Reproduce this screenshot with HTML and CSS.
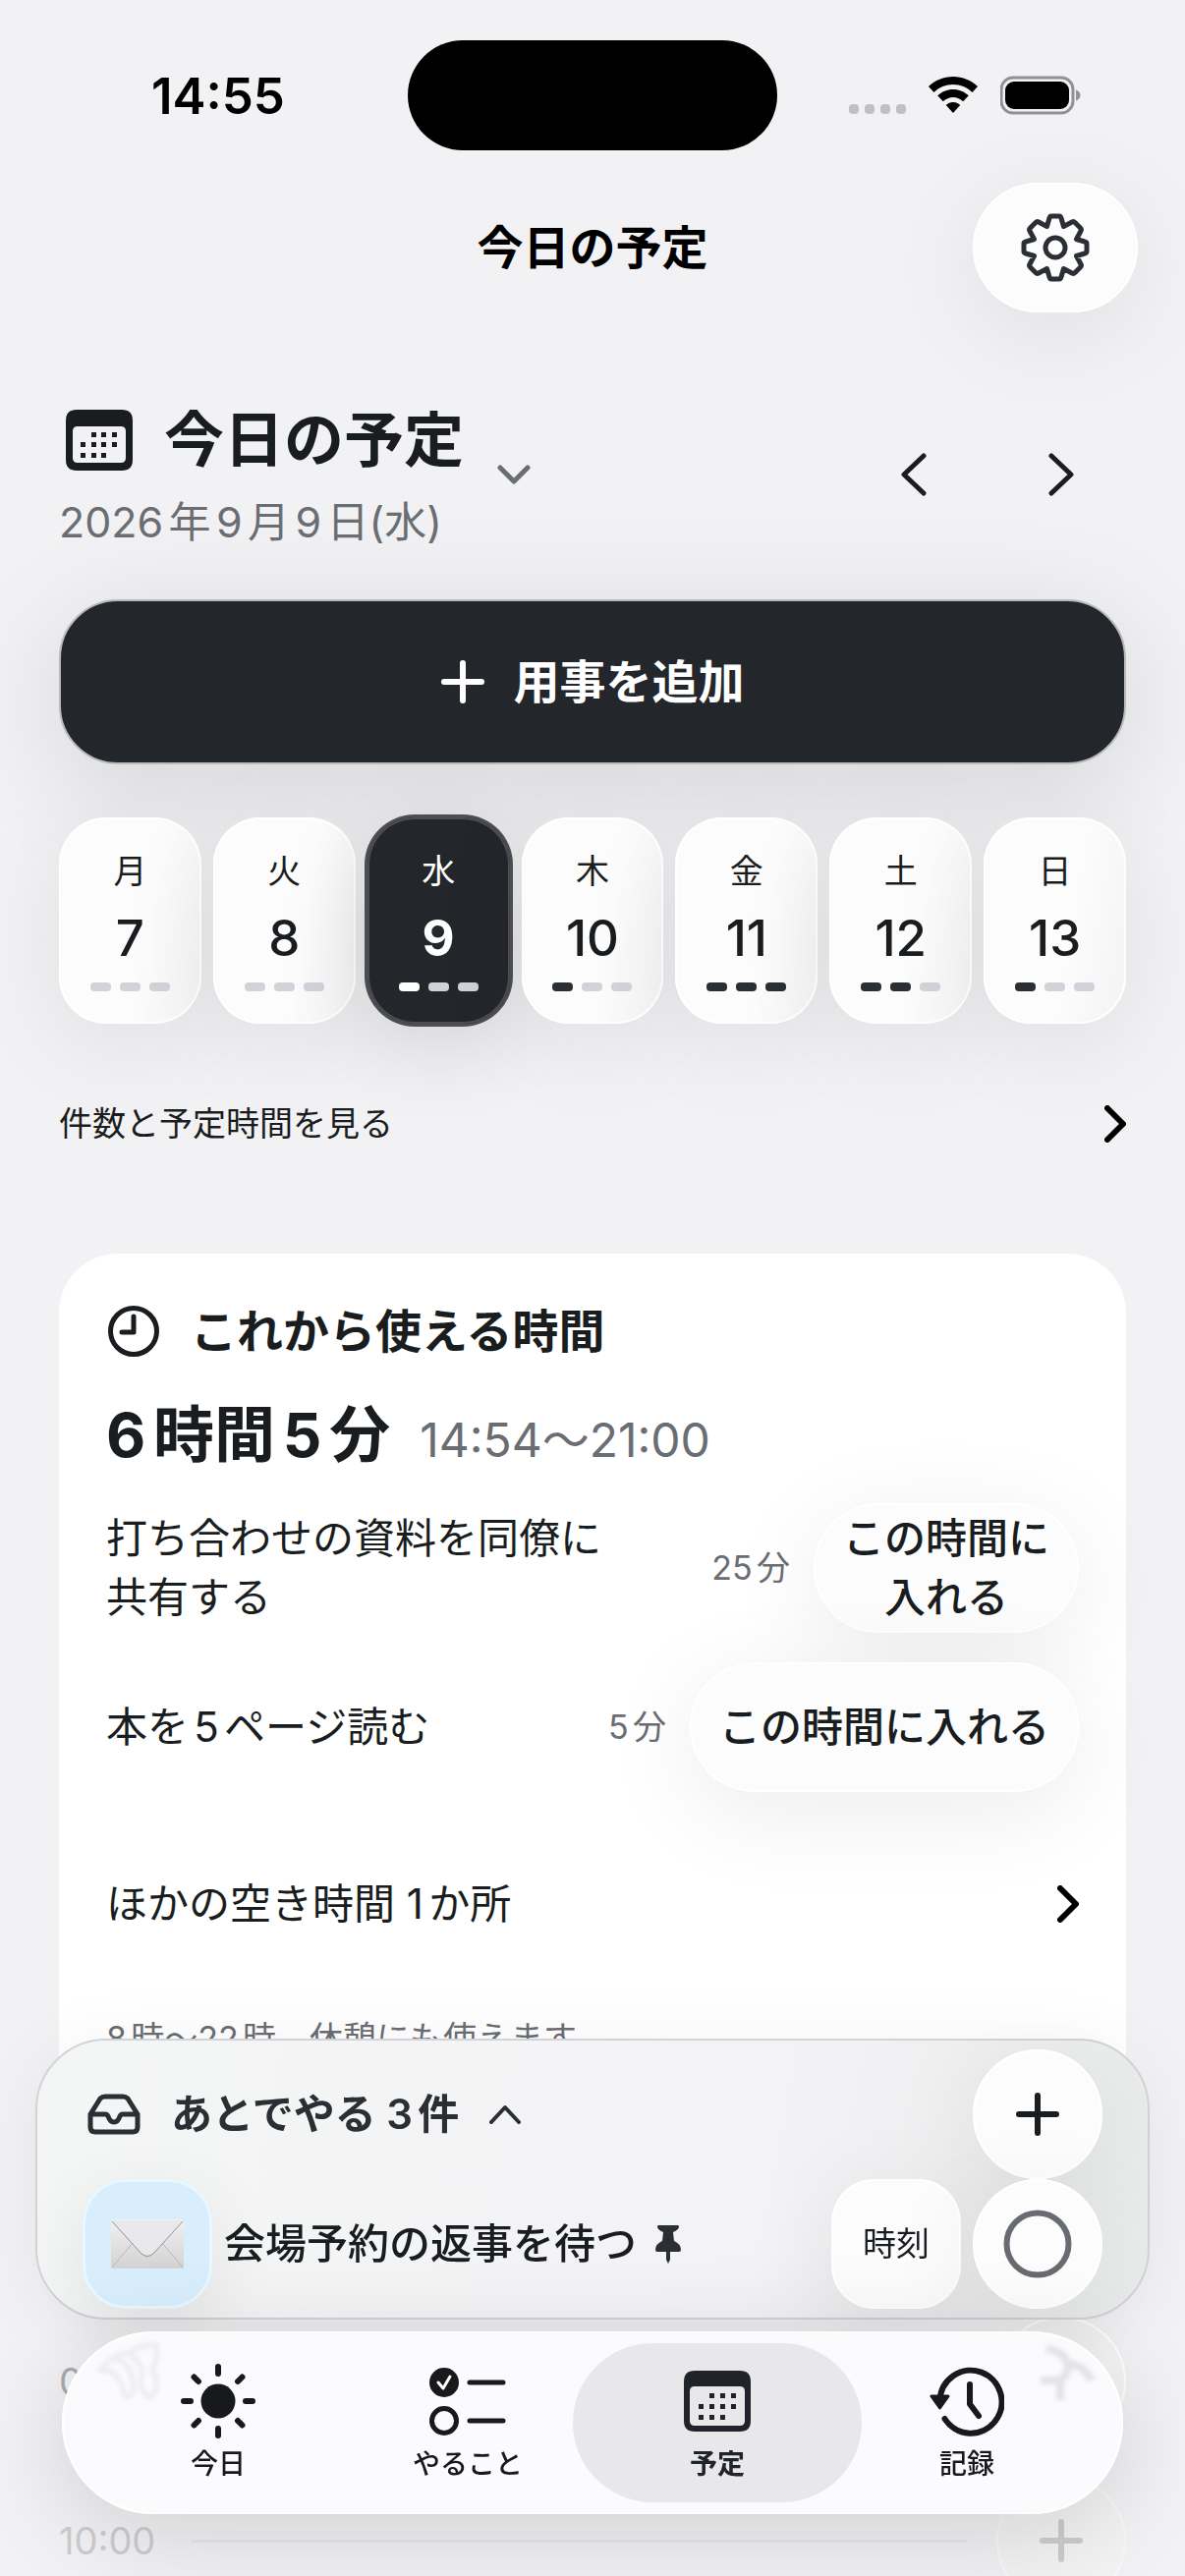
FILE: index.html
```html
<!DOCTYPE html>
<html lang="ja">
<head>
    <meta charset="UTF-8">
    <meta name="viewport" content="width=device-width, initial-scale=1.0">
    <title>今日の予定</title>
    <link rel="stylesheet" href="styles.css">
</head>
<body>
    <div class="app">
        <!-- ステータスバー -->
        <div class="status-bar">
            <div class="status-time">14:55</div>
            <div class="island"></div>
            <div class="status-icons">
                <svg width="58" height="40" viewBox="0 0 58 40" fill="#c0c0c3">
                    <rect x="0" y="29" width="10" height="10" rx="4"/>
                    <rect x="16" y="29" width="10" height="10" rx="4"/>
                    <rect x="32" y="29" width="10" height="10" rx="4"/>
                    <rect x="48" y="29" width="10" height="10" rx="4"/>
                </svg>
                <svg width="52" height="40" viewBox="0 0 52 40">
                    <path d="M26 1C16.500 1 7.500 4.700 1 11l5.500 6C11.700 11.900 18.600 9 26 9s14.300 2.900 19.500 8l5.500-6C44.500 4.700 35.500 1 26 1z"/>
                    <path d="M26 14c-6 0-11.600 2.300-15.800 6.300l5.600 6C18.600 23.600 22.200 22 26 22s7.400 1.600 10.200 4.300l5.600-6C37.600 16.300 32 14 26 14z"/>
                    <path d="M26 27c-2.800 0-5.300 1.100-7.200 2.900L26 38l7.200-8.100C31.300 28.100 28.800 27 26 27z"/>
                </svg>
                <svg width="82" height="40" viewBox="0 0 82 40">
                    <rect x="1" y="2" width="73" height="36" rx="12" fill="none" stroke="#929295" stroke-width="3"/>
                    <rect x="5" y="6" width="65" height="28" rx="9"/>
                    <path d="M77 14.500c3 1 4.500 3 4.500 5.500s-1.500 4.500-4.500 5.500z" fill="#929295"/>
                </svg>
            </div>
        </div>

        <!-- ナビゲーション -->
        <header class="nav-bar">
            <h1 class="nav-title">今日の予定</h1>
            <button class="settings-button glass" aria-label="設定">
                <svg width="72" height="72" viewBox="-36 -36 72 72" fill="none" stroke="#2b2e34" stroke-width="5" stroke-linejoin="round">
                    <path d="M-6-30Q-5.500-32-4-32H4Q5.500-32 6-30L8.500-21.500 17-26Q18.500-27 20-25.500L25.500-20Q27-18.500 26-17L21.500-8.500 30-6Q32-5.500 32-4V4Q32 5.500 30 6L21.500 8.500 26 17Q27 18.500 25.500 20L20 25.500Q18.500 27 17 26L8.500 21.500 6 30Q5.500 32 4 32H-4Q-5.500 32-6 30L-8.500 21.500-17 26Q-18.500 27-20 25.500L-25.500 20Q-27 18.500-26 17L-21.500 8.500-30 6Q-32 5.500-32 4V-4Q-32-5.500-30-6L-21.500-8.500-26-17Q-27-18.500-25.500-20L-20-25.500Q-18.500-27-17-26L-8.500-21.500Z"/>
                    <circle r="10"/>
                </svg>
            </button>
        </header>

        <main class="content">
            <div class="day-header">
                <button class="day-title">
                    <span class="day-text">
                        <span class="day-name">
                            <svg class="icon-calendar" width="68" height="62" viewBox="0 0 68 62">
                                <path fill-rule="evenodd" d="M11 0h46q11 0 11 11v40q0 11-11 11H11Q0 62 0 51V11Q0 0 11 0zM12 17q-5 0-5 5v27q0 5 5 5h44q5 0 5-5V22q0-5-5-5z"/>
                                <path d="M26 23h5v5h-5zM36 23h5v5h-5zM47 23h5v5h-5zM15 33h5v5h-5zM26 33h5v5h-5zM36 33h5v5h-5zM47 33h5v5h-5zM15 44h5v5h-5zM26 44h5v5h-5zM36 44h5v5h-5z"/>
                            </svg>
                            今日の予定
                        </span>
                        <span class="day-date">2026年9月9日(水)</span>
                    </span>
                    <svg class="line-icon muted" width="34" height="20" viewBox="0 0 34 20" stroke-width="5"><path d="M3 3l14 14L31 3"/></svg>
                </button>
                <div class="day-arrows">
                    <button aria-label="前の日"><svg class="line-icon" width="26" height="44" viewBox="0 0 26 44" stroke-width="5"><path d="M23 3L3 22l20 19"/></svg></button>
                    <button aria-label="次の日"><svg class="line-icon" width="26" height="44" viewBox="0 0 26 44" stroke-width="5"><path d="M3 3l20 19L3 41"/></svg></button>
                </div>
            </div>

            <button class="add-button">
                <svg class="line-icon" width="44" height="44" viewBox="0 0 44 44" stroke-width="6"><path d="M22 3v38M3 22h38"/></svg>
                用事を追加
            </button>

            <div class="week">
                <button class="day glass"><span class="weekday">月</span><span class="date">7</span><span class="load"><i></i><i></i><i></i></span></button>
                <button class="day glass"><span class="weekday">火</span><span class="date">8</span><span class="load"><i></i><i></i><i></i></span></button>
                <button class="day glass selected" aria-current="date"><span class="weekday">水</span><span class="date">9</span><span class="load"><i class="on"></i><i></i><i></i></span></button>
                <button class="day glass"><span class="weekday">木</span><span class="date">10</span><span class="load"><i class="on"></i><i></i><i></i></span></button>
                <button class="day glass"><span class="weekday">金</span><span class="date">11</span><span class="load"><i class="on"></i><i class="on"></i><i class="on"></i></span></button>
                <button class="day glass"><span class="weekday">土</span><span class="date">12</span><span class="load"><i class="on"></i><i class="on"></i><i></i></span></button>
                <button class="day glass"><span class="weekday">日</span><span class="date">13</span><span class="load"><i class="on"></i><i></i><i></i></span></button>
            </div>

            <button class="disclosure small">
                件数と予定時間を見る
                <svg class="line-icon" width="22" height="38" viewBox="0 0 22 38" stroke-width="6"><path d="M3 3l16 16L3 35"/></svg>
            </button>

            <section class="free-card">
                <h2 class="free-title">
                    <svg class="line-icon" width="56" height="56" viewBox="0 0 56 56" stroke-width="5"><circle cx="28" cy="28" r="23.500"/><path d="M28 13v16H16"/></svg>
                    これから使える時間
                </h2>
                <div class="free-total">
                    <span class="free-length">6時間5分</span>
                    <span class="free-range">14:54〜21:00</span>
                </div>
                <ul class="suggestions">
                    <li>
                        <span class="task">打ち合わせの資料を同僚に共有する</span>
                        <span class="minutes">25分</span>
                        <button class="put-button glass">この時間に<br>入れる</button>
                    </li>
                    <li>
                        <span class="task">本を5ページ読む</span>
                        <span class="minutes">5分</span>
                        <button class="put-button glass">この時間に入れる</button>
                    </li>
                </ul>
                <button class="disclosure">
                    ほかの空き時間 1か所
                    <svg class="line-icon" width="22" height="38" viewBox="0 0 22 38" stroke-width="6"><path d="M3 3l16 16L3 35"/></svg>
                </button>
                <p class="note">8時〜22時　休憩にも使えます</p>
            </section>

            <div class="timeline">
                <div class="hour">
                    <span>09:00</span>
                    <hr>
                    <button class="hour-add" aria-label="9時に追加"></button>
                </div>
                <div class="hour late">
                    <span>10:00</span>
                    <hr>
                    <button class="hour-add" aria-label="10時に追加">
                        <svg class="line-icon" width="44" height="44" viewBox="0 0 44 44" stroke-width="6"><path d="M22 3v38M3 22h38"/></svg>
                    </button>
                </div>
            </div>
        </main>

        <!-- 下に重なる領域 -->
        <div class="dock">
            <section class="later">
                <div class="later-head">
                    <button class="later-toggle">
                        <svg class="line-icon" width="56" height="44" viewBox="0 0 56 44" stroke-width="5">
                            <path d="M4 22L14 6q2-2 5-2h18q3 0 5 2l10 16v13q0 5-5 5H9q-5 0-5-5zM4 22h15q2 0 3 2 2 6 6 6t6-6q1-2 3-2h15"/>
                        </svg>
                        あとでやる 3件
                        <svg class="line-icon" width="34" height="20" viewBox="0 0 34 20" stroke-width="4"><path d="M3 18L17 3l14 15"/></svg>
                    </button>
                    <button class="round-button glass" aria-label="あとでやるを追加">
                        <svg class="line-icon" width="44" height="44" viewBox="0 0 44 44" stroke-width="6"><path d="M22 3v38M3 22h38"/></svg>
                    </button>
                </div>
                <div class="later-item">
                    <div class="item-icon">
                        <svg width="76" height="52" viewBox="0 0 76 52">
                            <defs>
                                <linearGradient id="paper" x1="0" y1="0" x2="0" y2="1">
                                    <stop offset="0" stop-color="#f2f1f2"/>
                                    <stop offset="1" stop-color="#d3d2d3"/>
                                </linearGradient>
                            </defs>
                            <rect x="1" y="1" width="74" height="50" rx="2" fill="url(#paper)"/>
                            <path d="M2 50l21-25M74 50L53 25" stroke="#b7b7ba" stroke-width="1" fill="none"/>
                            <path d="M2 2l29 32q7 8 14 0L74 2z" fill="#e9e9eb"/>
                            <path d="M2 3l29 32q7 7 14 0L74 3" stroke="#8d949c" stroke-width="1" fill="none"/>
                        </svg>
                    </div>
                    <span class="item-name">会場予約の返事を待つ</span>
                    <svg class="pin" width="28" height="40" viewBox="0 0 28 40">
                        <path d="M4 1h20q1 0 1 2-1 3-6 5l1 9q7 3 7 9 0 2-2 2H3q-2 0-2-2 0-6 7-9l1-9Q4 6 3 3q0-2 1-2zM12 28h4v8l-2 4-2-4z"/>
                    </svg>
                    <button class="time-button glass">時刻</button>
                    <button class="round-button glass" aria-label="完了にする">
                        <svg width="70" height="70" viewBox="0 0 70 70"><circle cx="35" cy="35" r="31.500" fill="none" stroke="#686b70" stroke-width="6"/></svg>
                    </button>
                </div>
            </section>

            <nav class="tab-bar">
                <svg class="ghost ghost-left" width="70" height="70" viewBox="0 0 70 70"><path d="M4 30Q20 12 34 12 42 4 62 4V22q-8 6 0 14v12q-2 10-9 8-8-6-7-18Q52 26 34 12M4 30q20-4 26 26 8 2 9-8Q38 22 20 18"/></svg>
                <svg class="ghost ghost-right" width="70" height="70" viewBox="0 0 70 70"><path d="M14 8q20 2 22 18-2 12-10 14H8M36 24q14-2 24 16M28 38v22"/></svg>
                <a class="tab" href="#today">
                    <svg class="line-icon" width="76" height="76" viewBox="0 0 76 76" stroke-width="6">
                        <circle cx="38" cy="38" r="17.500" fill="currentColor" stroke="none"/>
                        <path d="M38 3v7M38 66v7M3 38h7M66 38h7M13.500 13.500l4.500 4.500M58 58l4.500 4.500M13.500 62.500l4.500-4.500M58 18l4.500-4.500"/>
                    </svg>
                    今日
                </a>
                <a class="tab" href="#todo">
                    <svg class="line-icon" width="78" height="76" viewBox="0 0 78 76" stroke-width="5">
                        <circle cx="15" cy="19" r="15" fill="currentColor" stroke="none"/>
                        <path d="M9 19l5 6 7-12" stroke="#fff" stroke-width="3"/>
                        <circle cx="15" cy="58" r="12.500"/>
                        <path d="M41 19h34M41 58h34"/>
                    </svg>
                    やること
                </a>
                <a class="tab active" href="#plan" aria-current="page">
                    <svg class="icon-calendar" width="68" height="76" viewBox="0 -7 68 76">
                        <path fill-rule="evenodd" d="M11 0h46q11 0 11 11v40q0 11-11 11H11Q0 62 0 51V11Q0 0 11 0zM11 16q-5 0-5 5v30q0 5 5 5h46q5 0 5-5V21q0-5-5-5z"/>
                        <path d="M26 23h5v5h-5zM37 23h5v5h-5zM48 23h5v5h-5zM15 34h5v5h-5zM26 34h5v5h-5zM37 34h5v5h-5zM48 34h5v5h-5zM15 45h5v5h-5zM26 45h5v5h-5zM37 45h5v5h-5z"/>
                    </svg>
                    予定
                </a>
                <a class="tab" href="#log">
                    <svg class="line-icon" width="76" height="76" viewBox="0 0 76 76" stroke-width="6">
                        <path d="M10.500 38a31.500 32 0 1 1 5 18M41 21v20l9 12"/>
                        <path d="M2 33h17l-8.500 12z" fill="currentColor" stroke-width="3"/>
                    </svg>
                    記録
                </a>
            </nav>
        </div>
    </div>
</body>
</html>
```

FILE: styles.css
```css
* {
    box-sizing: border-box;
}
body {
    margin: 0;
    background: #f2f2f4;
    color: #1a1d20;
    font-family: Inter, "Noto Sans CJK JP", sans-serif;
    font-size: 42px;
    line-height: 60px;
    text-autospace: normal;
}
button {
    border: none;
    background: none;
    padding: 0;
    color: inherit;
    font: inherit;
    cursor: pointer;
}
svg {
    display: block;
    flex: none;
}
.line-icon {
    fill: none;
    stroke: currentColor;
    stroke-linecap: round;
    stroke-linejoin: round;
}
.muted {
    color: #6a6d72;
}
.glass {
    background: #fcfcfd;
    box-shadow: 0 20px 100px rgba(0, 0, 0, 0.08), inset 0 0 0 2px #fff;
}
.app {
    position: relative;
    height: 100vh;
    overflow: hidden;
}

/* status bar */
.status-bar {
    display: grid;
    grid-template-columns: 1fr 376px 1fr;
    height: 186px;
    padding-top: 41px;
    color: #000;
}
.status-time {
    padding: 27px 0 0 154px;
    font-size: 51px;
    font-weight: 600;
}
.island {
    height: 112px;
    border-radius: 56px;
    background: #000;
}
.status-icons {
    display: flex;
    justify-content: flex-end;
    align-items: flex-start;
    gap: 22px;
    padding: 36px 106px 0 0;
}

/* nav bar */
.nav-bar {
    display: grid;
    grid-template-columns: 1fr auto 1fr;
    align-items: center;
    height: 132px;
    padding: 0 48px;
}
.nav-title {
    grid-column: 2;
    margin: 0;
    color: #000;
    font-size: 47px;
    font-weight: 600;
}
.settings-button {
    display: grid;
    place-items: center;
    justify-self: end;
    width: 168px;
    height: 132px;
    border-radius: 66px;
}

.content {
    padding: 90px 60px 0;
}
.day-header {
    display: flex;
    justify-content: space-between;
    align-items: center;
}
.day-title {
    display: flex;
    align-items: center;
    gap: 34px;
    text-align: left;
}
.day-text {
    display: flex;
    flex-direction: column;
    gap: 16px;
}
.day-name {
    display: flex;
    align-items: center;
    gap: 32px;
    padding-left: 7px;
    font-size: 61px;
    line-height: 80px;
    font-weight: 700;
}
.icon-calendar {
    fill: currentColor;
}
.day-date {
    color: #6a6d72;
    font-size: 43px;
    line-height: 54px;
}
.day-arrows {
    display: flex;
    gap: 18px;
}
.day-arrows button {
    display: grid;
    place-items: center;
    width: 132px;
    height: 132px;
}
.add-button {
    display: flex;
    justify-content: center;
    align-items: center;
    gap: 30px;
    width: 100%;
    height: 168px;
    margin-top: 52px;
    border: 2px solid #b9babd;
    border-radius: 60px;
    background: #23262b;
    box-shadow: 0 24px 120px rgba(0, 0, 0, 0.12);
    color: #fff;
    font-size: 47px;
    font-weight: 600;
}

/* week strip */
.week {
    display: grid;
    grid-template-columns: repeat(7, 1fr);
    gap: 12px;
    margin-top: 54px;
}
.day {
    display: flex;
    flex-direction: column;
    align-items: center;
    gap: 15px;
    height: 210px;
    padding-top: 32px;
    border-radius: 48px;
    background: linear-gradient(100deg, #fcfcfd 60%, #f3f3f4);
}
.weekday {
    font-size: 34px;
    line-height: 46px;
}
.date {
    font-size: 51px;
    font-weight: 500;
    line-height: 60px;
}
.load {
    display: flex;
    gap: 9px;
}
.load i {
    width: 21px;
    height: 9px;
    border-radius: 4px;
    background: #d2d3d9;
}
.load .on {
    background: #2b2e33;
}
.day.selected {
    background: #23262b;
    box-shadow: 0 0 0 3px #4d4e54, inset 0 0 0 2px #4d4e54, 0 20px 90px rgba(0, 0, 0, 0.14);
    color: #fff;
}
.selected .date {
    font-weight: 700;
}
.selected .on {
    background: #fff;
}

.disclosure {
    display: flex;
    justify-content: space-between;
    align-items: center;
    width: 100%;
    height: 132px;
    margin-top: 48px;
    text-align: left;
}
.disclosure svg {
    color: #000;
}
.disclosure.small {
    margin-top: 36px;
    font-size: 34px;
}

/* free time card */
.free-card {
    margin-top: 66px;
    padding: 48px;
    border-radius: 60px;
    background: #fff;
}
.free-title {
    display: flex;
    align-items: center;
    gap: 30px;
    margin: 0;
    font-size: 47px;
    font-weight: 600;
    line-height: 62px;
}
.free-total {
    display: flex;
    align-items: baseline;
    gap: 30px;
    margin-top: 39px;
    line-height: 72px;
}
.free-length {
    font-size: 62px;
    font-weight: 700;
}
.free-range {
    color: #6a6d72;
    font-size: 48px;
}
.suggestions {
    display: flex;
    flex-direction: column;
    gap: 30px;
    margin: 28px 0 0;
    padding: 0;
    list-style: none;
}
.suggestions li {
    display: flex;
    align-items: center;
    gap: 24px;
}
.task {
    flex: 1;
    max-width: 520px;
}
.minutes {
    margin-left: auto;
    color: #6a6d72;
    font-size: 34px;
}
.put-button {
    height: 132px;
    padding: 0 30px;
    border-radius: 66px;
    font-weight: 500;
}
.note {
    margin: 47px 0 0;
    color: #6a6d72;
    font-size: 34px;
    line-height: 48px;
}

/* timeline */
.timeline {
    display: flex;
    flex-direction: column;
    gap: 30px;
    margin-top: 211px;
    color: #a9aaad;
    font-size: 38px;
}
.hour {
    display: flex;
    align-items: center;
    gap: 30px;
}
.hour span {
    width: 105px;
}
.hour hr {
    flex: 1;
    margin: 0;
    border: none;
    border-top: 3px solid #dfdfe2;
}
.hour-add {
    display: grid;
    place-items: center;
    width: 132px;
    height: 132px;
    border: 2px solid #fff;
    border-radius: 50%;
    background: #f4f4f5;
}
.late {
    opacity: 0.5;
}

/* panel and tabs over the page */
.dock {
    position: fixed;
    right: 0;
    bottom: 0;
    left: 0;
    padding: 0 36px 63px;
}
.later {
    padding: 9px 46px;
    border: 2px solid #d2d3d9;
    border-radius: 72px;
    background: linear-gradient(100deg, #f4f5f5, #f3f3f5 65%, #e9eaea);
    box-shadow: 0 10px 80px rgba(0, 0, 0, 0.06);
}
.later-head,
.later-item {
    display: flex;
    align-items: center;
}
.later-head {
    justify-content: space-between;
}
.later-toggle {
    display: flex;
    align-items: center;
    gap: 30px;
    padding-left: 4px;
    color: #2b2e33;
    font-weight: 600;
}
.round-button {
    display: grid;
    place-items: center;
    width: 132px;
    height: 132px;
    border-radius: 50%;
}
.item-icon {
    display: grid;
    place-items: center;
    width: 132px;
    height: 132px;
    border-radius: 44px;
    background: #d9eefc;
    box-shadow: 0 20px 70px rgba(0, 0, 0, 0.08), inset 0 0 0 3px #e8f8fe;
}
.item-name {
    margin-left: 12px;
    font-weight: 500;
}
.pin {
    margin-left: 18px;
    fill: #2b2e33;
}
.time-button {
    width: 132px;
    height: 132px;
    margin: 0 12px 0 auto;
    border-radius: 44px;
    font-size: 34px;
}
.tab-bar {
    position: relative;
    display: flex;
    margin: 12px 27px 0;
    padding: 12px;
    border-radius: 93px;
    background: #fbfbfd;
    box-shadow: 0 20px 100px rgba(0, 0, 0, 0.14), inset 0 0 0 2px #fff;
}
.tab {
    position: relative;
    display: flex;
    flex: 1;
    flex-direction: column;
    align-items: center;
    gap: 6px;
    height: 162px;
    padding-top: 21px;
    border-radius: 81px;
    color: #18191b;
    font-size: 28px;
    font-weight: 500;
    line-height: 40px;
    text-decoration: none;
}
.tab + .tab {
    margin-left: -40px;
}
.tab.active {
    background: #e8e8ea;
    color: #20232a;
    font-weight: 700;
}
.ghost {
    position: absolute;
    top: 10px;
    fill: none;
    stroke: #ececf1;
    stroke-width: 5;
    filter: blur(2px);
}
.ghost-left {
    left: 34px;
}
.ghost-right {
    right: 22px;
    stroke: #e2e3e8;
    stroke-width: 8;
}
```
